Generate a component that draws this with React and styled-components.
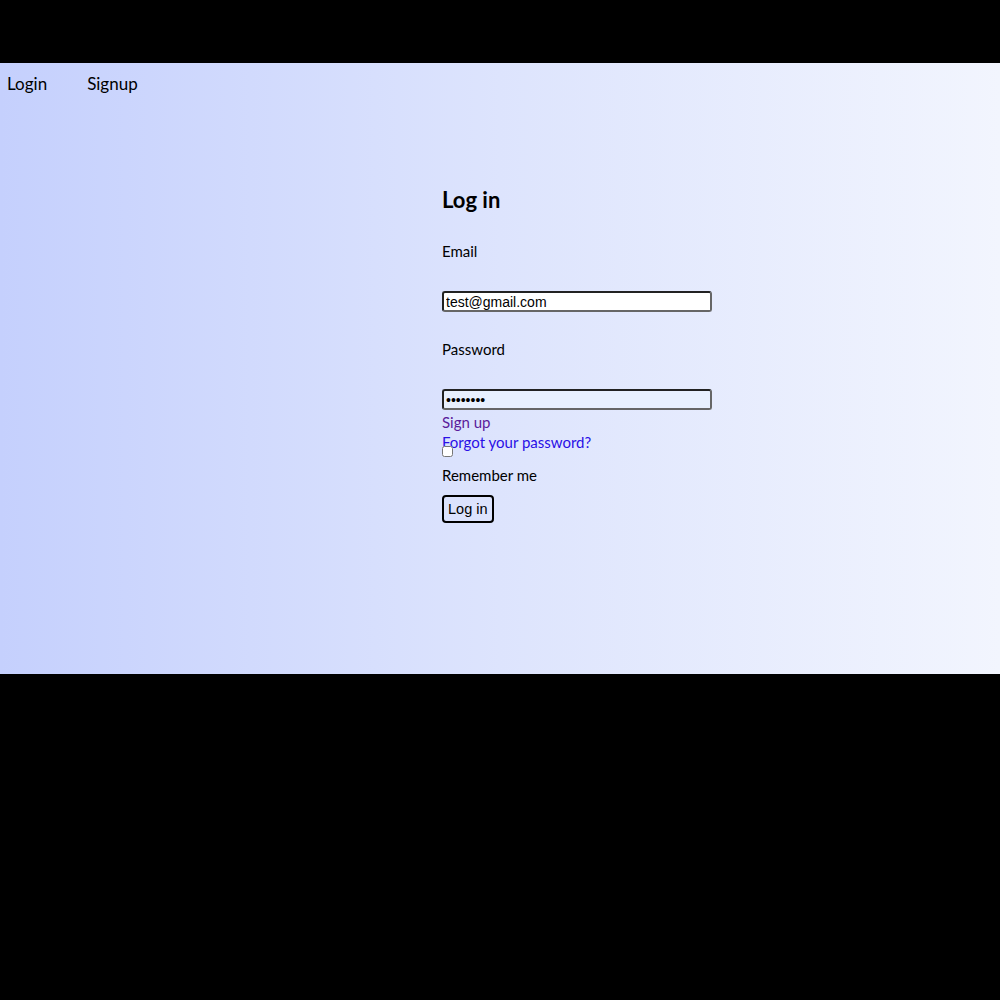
import styled, { createGlobalStyle } from "styled-components";

const GlobalStyle = createGlobalStyle`
  html, body {
    margin: 0;
    padding: 0;
    background: #000;
  }
  body {
    font-family: Lato, "Noto Sans", sans-serif;
  }
`;

const Screen = styled.div`
  height: 1000px;
  padding-top: 63px;
  box-sizing: border-box;
  background: #000;
`;

const Page = styled.div`
  height: 611px;
  background: linear-gradient(to right, #c5d0fd 0%, #dde4fd 50%, #f2f5fe 100%);
  color: #000;
`;

const Nav = styled.nav`
  display: flex;
  gap: 40px;
  padding: 11px 7px 0;
  font-size: 17px;
  line-height: 20px;
`;

const NavItem = styled.a`
  color: #000;
  text-decoration: none;
`;

const FormWrap = styled.div`
  display: flex;
  flex-direction: column;
  align-items: flex-start;
  width: 270px;
  margin: 93px 0 0 442px;
`;

const Heading = styled.h2`
  margin: 0;
  font-size: 22px;
  line-height: 26px;
  font-weight: 700;
`;

const Label = styled.label`
  font-size: 15px;
  line-height: 20px;
  margin-top: ${(p) => p.$top}px;
`;

const Input = styled.input`
  box-sizing: border-box;
  width: 270px;
  height: 21px;
  margin: ${(p) => p.$top}px 0 0;
  padding: 0 2px;
  border: 2px solid;
  border-color: #222 #666 #666 #222;
  border-radius: 3px;
  background: ${(p) => (p.$filled ? "#e8f0fe" : "#fff")};
  font-family: "Liberation Sans", Arial, sans-serif;
  font-size: 14px;
  color: #000;
  outline: none;
`;

const Links = styled.div`
  display: flex;
  flex-direction: column;
  align-items: flex-start;
  margin-top: 2px;
`;

const TextLink = styled.a`
  font-size: 15px;
  line-height: 20px;
  text-decoration: none;
  color: ${(p) => p.$color};
`;

const Check = styled.input`
  width: 11px;
  height: 11px;
  margin: -6px 0 0;
`;

const Button = styled.button`
  margin-top: 10px;
  height: 28px;
  padding: 0 4px;
  border: 2px solid #000;
  border-radius: 4px;
  background: transparent;
  font-family: "Liberation Sans", Arial, sans-serif;
  font-size: 14.5px;
  color: #000;
`;

export default function App() {
  return (
    <Screen>
      <GlobalStyle />
      <Page>
        <Nav>
          <NavItem href="#">Login</NavItem>
          <NavItem href="#">Signup</NavItem>
        </Nav>
        <FormWrap>
          <Heading>Log in</Heading>
          <Label $top={28}>Email</Label>
          <Input $top={30} type="email" defaultValue="test@gmail.com" />
          <Label $top={27}>Password</Label>
          <Input $top={30} $filled type="password" defaultValue="password" />
          <Links>
            <TextLink href="#" $color="#5a1a9b">Sign up</TextLink>
            <TextLink href="#" $color="#2a10e6">Forgot your password?</TextLink>
          </Links>
          <Check type="checkbox" />
          <Label $top={8}>Remember me</Label>
          <Button>Log in</Button>
        </FormWrap>
      </Page>
    </Screen>
  );
}
